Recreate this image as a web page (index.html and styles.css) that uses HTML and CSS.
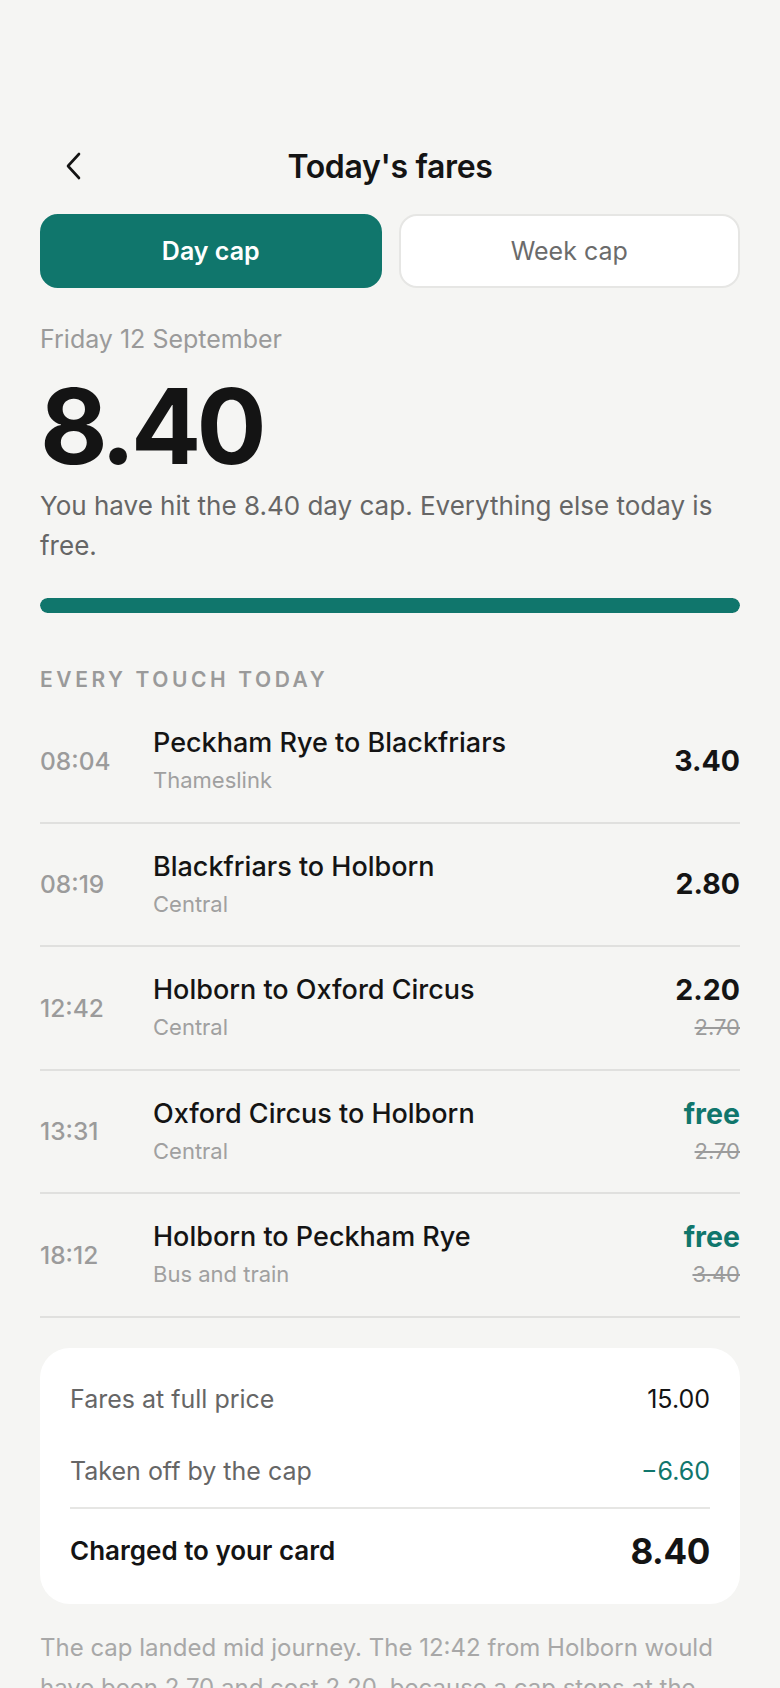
FILE: index.html
```html
<!DOCTYPE html>
<html lang="en">
<head>
<meta charset="utf-8">
<title>Today's fares</title>
<link rel="stylesheet" href="styles.css">
</head>
<body>
<div class="app">
  <header class="header">
    <button class="back" aria-label="Back">
      <svg width="20" height="30" viewBox="0 0 20 30" fill="none"><path d="M15 3 L4 15 L15 27" stroke="#141414" stroke-width="2.6" stroke-linecap="round" stroke-linejoin="round"/></svg>
    </button>
    <h1 class="title">Today's fares</h1>
    <span></span>
  </header>

  <div class="tabs">
    <button class="tab tab-active">Day cap</button>
    <button class="tab">Week cap</button>
  </div>

  <div class="date">Friday 12 September</div>
  <div class="big">8.40</div>
  <p class="lead">You have hit the 8.40 day cap. Everything else today is free.</p>
  <div class="bar"><div class="bar-fill" style="width:100%"></div></div>

  <div class="section-label">EVERY TOUCH TODAY</div>
  <ul class="list">
    <li class="row">
      <span class="time">08:04</span>
      <div class="trip"><div class="name">Peckham Rye to Blackfriars</div><div class="sub">Thameslink</div></div>
      <div class="price"><div class="amt">3.40</div></div>
    </li>
    <li class="row">
      <span class="time">08:19</span>
      <div class="trip"><div class="name">Blackfriars to Holborn</div><div class="sub">Central</div></div>
      <div class="price"><div class="amt">2.80</div></div>
    </li>
    <li class="row">
      <span class="time">12:42</span>
      <div class="trip"><div class="name">Holborn to Oxford Circus</div><div class="sub">Central</div></div>
      <div class="price"><div class="amt">2.20</div><div class="was">2.70</div></div>
    </li>
    <li class="row">
      <span class="time">13:31</span>
      <div class="trip"><div class="name">Oxford Circus to Holborn</div><div class="sub">Central</div></div>
      <div class="price"><div class="amt free">free</div><div class="was">2.70</div></div>
    </li>
    <li class="row">
      <span class="time">18:12</span>
      <div class="trip"><div class="name">Holborn to Peckham Rye</div><div class="sub">Bus and train</div></div>
      <div class="price"><div class="amt free">free</div><div class="was">3.40</div></div>
    </li>
  </ul>

  <section class="summary">
    <div class="sum-row"><span class="sum-label">Fares at full price</span><span class="sum-val">15.00</span></div>
    <div class="sum-row"><span class="sum-label">Taken off by the cap</span><span class="sum-val saved">&minus;6.60</span></div>
    <div class="sum-row total"><span class="sum-label">Charged to your card</span><span class="sum-val">8.40</span></div>
  </section>

  <p class="note">The cap landed mid journey. The 12:42 from Holborn would have been 2.70 and cost 2.20, because a cap stops at the exact amount left to reach it. Everything after that was free.</p>
</div>
</body>
</html>
```

FILE: styles.css
```css
* { box-sizing: border-box; }
html, body { margin: 0; padding: 0; }
body {
  background: #f5f5f3;
  font-family: Inter, "Noto Sans", sans-serif;
  color: #141414;
}
.app {
  padding: 136px 40px 40px;
}
.header {
  display: grid;
  grid-template-columns: 1fr auto 1fr;
  align-items: center;
  height: 60px;
}
.back {
  justify-self: start;
  background: none;
  border: 0;
  padding: 0;
  margin-left: 24px;
  width: 20px;
  height: 30px;
  display: flex;
}
.title {
  margin: 0;
  font-size: 32px;
  font-weight: 600;
  letter-spacing: -0.01em;
}
.tabs {
  display: grid;
  grid-template-columns: 1fr 1fr;
  gap: 17px;
  margin-top: 18px;
}
.tab {
  height: 74px;
  border-radius: 18px;
  border: 2px solid #e6e6e4;
  background: #fff;
  font-family: inherit;
  font-size: 25px;
  color: #6b6b6b;
  font-weight: 400;
}
.tab-active {
  background: #10766c;
  border-color: #10766c;
  color: #fff;
  font-weight: 600;
}
.date {
  margin-top: 35px;
  font-size: 25px;
  line-height: 32px;
  color: #9a9a9a;
}
.big {
  margin-top: 19px;
  font-size: 104px;
  line-height: 104px;
  font-weight: 700;
  letter-spacing: -0.045em;
  color: #141414;
}
.lead {
  margin: 8px 0 0;
  font-size: 26px;
  line-height: 40px;
  color: #666;
}
.bar {
  margin-top: 32px;
  height: 15px;
  border-radius: 8px;
  background: #e4e4e2;
  overflow: hidden;
}
.bar-fill {
  height: 100%;
  background: #10766c;
  border-radius: 8px;
}
.section-label {
  margin-top: 55px;
  font-size: 21px;
  line-height: 24px;
  font-weight: 600;
  letter-spacing: 0.17em;
  color: #9a9a9a;
}
.list {
  list-style: none;
  margin: 8px 0 0;
  padding: 0;
}
.row {
  display: grid;
  grid-template-columns: 113px 1fr auto;
  align-items: center;
  padding: 26.25px 0;
  border-bottom: 2px solid #e0e0de;
}
.time {
  font-size: 24.5px;
  font-weight: 500;
  color: #9b9b9b;
}
.name {
  font-size: 27px;
  line-height: 34px;
  font-weight: 500;
  color: #141414;
}
.sub {
  margin-top: 5px;
  font-size: 22px;
  line-height: 30px;
  color: #a0a0a0;
}
.price {
  display: flex;
  flex-direction: column;
  align-items: flex-end;
  justify-content: center;
}
.amt {
  font-size: 28.5px;
  line-height: 34px;
  font-weight: 700;
  color: #141414;
}
.amt.free { color: #10766c; }
.was {
  margin-top: 5px;
  font-size: 22px;
  line-height: 30px;
  color: #9b9b9b;
  text-decoration: line-through;
}
.summary {
  margin-top: 30px;
  background: #fff;
  border-radius: 30px;
  padding: 15px 30px 13px;
}
.sum-row {
  display: flex;
  justify-content: space-between;
  align-items: center;
  padding: 18px 0;
  line-height: 36px;
  font-size: 25px;
}
.sum-label { color: #666; }
.sum-val { color: #141414; }
.sum-val.saved { color: #10766c; }
.total {
  border-top: 2px solid #e6e6e4;
  line-height: 44px;
  padding-top: 20px;
}
.total .sum-label { color: #141414; font-weight: 600; font-size: 26px; }
.total .sum-val { font-size: 35px; font-weight: 700; letter-spacing: -0.01em; }
.note {
  margin: 24px 0 0;
  font-size: 24px;
  line-height: 40px;
  color: #a8a8a8;
}
```
